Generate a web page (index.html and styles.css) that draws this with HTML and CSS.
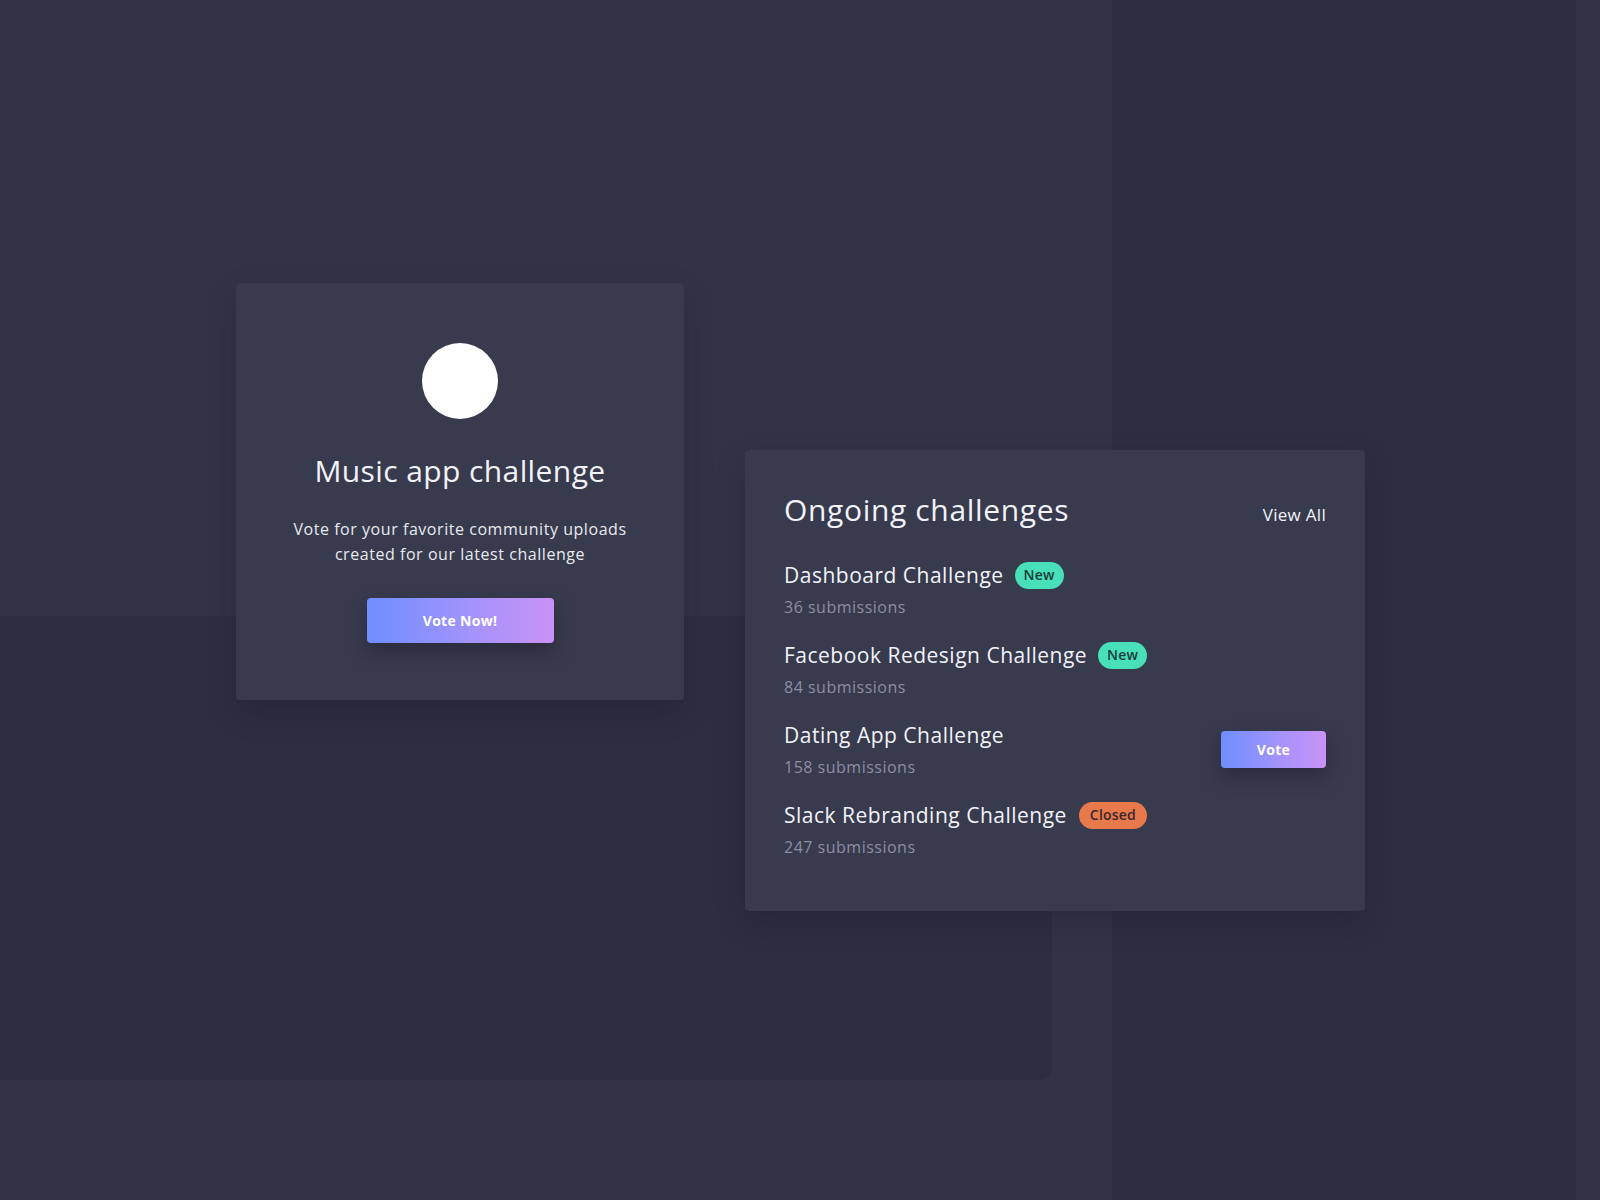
FILE: index.html
```html
<!DOCTYPE html>
<html lang="en">
<head>
<meta charset="utf-8">
<title>Challenges</title>
<link rel="stylesheet" href="styles.css">
</head>
<body>
<main class="stage">
  <section class="card feature">
    <div class="avatar"></div>
    <h1 class="feature-title">Music app challenge</h1>
    <p class="feature-desc">Vote for your favorite community uploads<br>created for our latest challenge</p>
    <button class="btn btn-lg">Vote Now!</button>
  </section>

  <section class="card list">
    <header class="list-head">
      <h2 class="list-title">Ongoing challenges</h2>
      <a class="view-all">View All</a>
    </header>
    <ul class="rows">
      <li class="row">
        <div class="row-main">
          <div class="row-title">Dashboard Challenge <span class="badge badge-new">New</span></div>
          <div class="row-sub">36 submissions</div>
        </div>
      </li>
      <li class="row">
        <div class="row-main">
          <div class="row-title">Facebook Redesign Challenge <span class="badge badge-new">New</span></div>
          <div class="row-sub">84 submissions</div>
        </div>
      </li>
      <li class="row">
        <div class="row-main">
          <div class="row-title">Dating App Challenge</div>
          <div class="row-sub">158 submissions</div>
        </div>
        <button class="btn btn-sm">Vote</button>
      </li>
      <li class="row">
        <div class="row-main">
          <div class="row-title">Slack Rebranding Challenge <span class="badge badge-closed">Closed</span></div>
          <div class="row-sub">247 submissions</div>
        </div>
      </li>
    </ul>
  </section>
</main>
</body>
</html>
```

FILE: styles.css
```css
html, body {
  margin: 0;
  padding: 0;
}

body {
  width: 1600px;
  height: 1200px;
  overflow: hidden;
  font-family: "Open Sans", "Liberation Sans", sans-serif;
  color: #f2f2f7;
  background-color: #323346;
  background-image:
    linear-gradient(#2d2e41, #2d2e41),
    linear-gradient(#2d2e41, #2d2e41),
    linear-gradient(#2d2e41, #2d2e41),
    radial-gradient(circle at 0 0, #2d2e41 11.5px, rgba(45, 46, 65, 0) 12.5px);
  background-repeat: no-repeat;
  background-position: 1112px 0, 0 616px, 0 1068px, 1040px 1068px;
  background-size: 464px 1200px, 1052px 452px, 1040px 12px, 12px 12px;
}

.stage {
  display: flex;
  align-items: flex-start;
  padding: 283px 0 0 236px;
  gap: 61px;
}

.card {
  background: #383a4e;
  border-radius: 4px;
  box-shadow: 0 12px 30px rgba(20, 20, 32, 0.22);
  box-sizing: border-box;
}

/* feature card */
.feature {
  width: 448px;
  height: 417px;
  display: flex;
  flex-direction: column;
  align-items: center;
  padding-top: 60px;
}

.avatar {
  width: 76px;
  height: 76px;
  border-radius: 50%;
  background: #ffffff;
}

.feature-title {
  margin: 34px 0 0;
  font-size: 30px;
  line-height: 36px;
  font-weight: 400;
  letter-spacing: 0.4px;
}

.feature-desc {
  margin: 28px 0 0;
  font-size: 16px;
  line-height: 25px;
  letter-spacing: 0.55px;
  text-align: center;
  color: #e9e9f0;
}

.btn {
  border: none;
  border-radius: 4px;
  color: #ffffff;
  font-family: "Open Sans", "Liberation Sans", sans-serif;
  font-weight: 700;
  letter-spacing: 0.3px;
  background: linear-gradient(90deg, #6e8eff 0%, #a393fb 55%, #c992f6 100%);
  box-shadow: 0 8px 18px rgba(18, 18, 30, 0.35);
  cursor: pointer;
  padding: 0;
}

.btn-lg {
  margin-top: 31px;
  width: 187px;
  height: 45px;
  font-size: 14px;
}

/* list card */
.list {
  margin-top: 167px;
  width: 620px;
  height: 461px;
  padding: 42px 39px 0 39px;
}

.list-head {
  display: flex;
  justify-content: space-between;
  align-items: baseline;
}

.list-title {
  margin: 0;
  font-size: 30px;
  line-height: 36px;
  font-weight: 400;
  letter-spacing: 0.65px;
}

.view-all {
  font-size: 17px;
  letter-spacing: 0.3px;
  color: #f2f2f7;
}

.rows {
  list-style: none;
  margin: 33px 0 0;
  padding: 0;
  display: flex;
  flex-direction: column;
  gap: 23px;
}

.row {
  display: flex;
  align-items: center;
  justify-content: space-between;
}

.row-title {
  display: flex;
  align-items: center;
  font-size: 21px;
  line-height: 28px;
  letter-spacing: 0.5px;
  color: #f2f2f7;
  white-space: pre;
}

.row-sub {
  margin-top: 7px;
  font-size: 16px;
  line-height: 22px;
  letter-spacing: 0.5px;
  color: #8d8ea2;
}

.badge {
  display: inline-flex;
  align-items: center;
  height: 27px;
  padding: 0 9px;
  margin-left: 5px;
  border-radius: 14px;
  font-size: 14px;
  font-weight: 600;
  letter-spacing: 0.2px;
}

.badge-new {
  background: #47e0b8;
  color: #1d3b3c;
}

.badge-closed {
  padding: 0 11px;
  margin-left: 6px;
  background: #e8794b;
  color: #3b2632;
}

.btn-sm {
  width: 105px;
  height: 37px;
  font-size: 14px;
}
```
